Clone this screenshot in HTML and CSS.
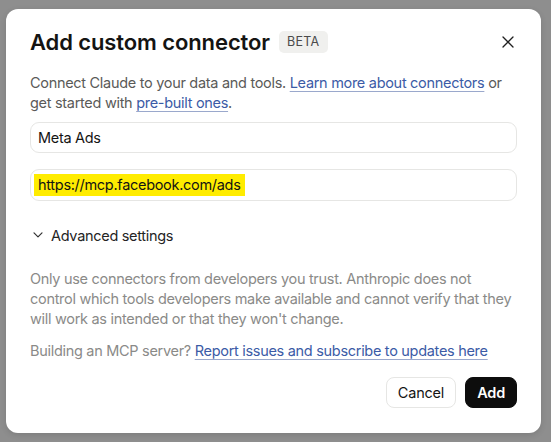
FILE: index.html
```html
<!DOCTYPE html>
<html lang="en">
<head>
    <meta charset="UTF-8">
    <meta name="viewport" content="width=device-width, initial-scale=1.0">
    <title>Add custom connector</title>
    <link rel="stylesheet" href="styles.css">
</head>
<body>
    <div class="overlay">
        <div class="modal">
            <div class="modal-header">
                <h2>Add custom connector</h2>
                <span class="badge">BETA</span>
                <button class="close-btn" aria-label="Close">
                    <svg width="12" height="12" viewBox="0 0 12 12">
                        <path d="M1 1 L11 11 M11 1 L1 11" stroke="#1f1f1f" stroke-width="1.3" fill="none" stroke-linecap="round"/>
                    </svg>
                </button>
            </div>

            <p class="intro">
                Connect Claude to your data and tools. <a href="#">Learn more about connectors</a> or
                get started with <a href="#">pre-built ones</a>.
            </p>

            <div class="field">
                <input type="text" class="text-input" value="Meta Ads">
            </div>
            <div class="field field-url">
                <div class="text-input"><span class="highlight">https://mcp.facebook.com/ads</span></div>
            </div>

            <div class="advanced">
                <svg width="10" height="6" viewBox="0 0 10 6">
                    <path d="M1 0.8 L5 4.8 L9 0.8" stroke="#333" stroke-width="1.2" fill="none" stroke-linecap="round" stroke-linejoin="round"/>
                </svg>
                <span>Advanced settings</span>
            </div>

            <p class="warning">
                Only use connectors from developers you trust. Anthropic does not
                control which tools developers make available and cannot verify that they
                will work as intended or that they won't change.
            </p>

            <p class="building">
                Building an MCP server? <a href="#">Report issues and subscribe to updates here</a>
            </p>

            <div class="actions">
                <button class="btn btn-cancel">Cancel</button>
                <button class="btn btn-add">Add</button>
            </div>
        </div>
    </div>
</body>
</html>
```

FILE: styles.css
```css
body {
    margin: 0;
    font-family: Inter, "Noto Sans", sans-serif;
    background-color: #8e8e8e;
    height: 442px;
    overflow: hidden;
}

.overlay {
    padding: 9px 0 0 6px;
}

.modal {
    background: white;
    width: 535px;
    height: 424px;
    box-sizing: border-box;
    border-radius: 12px;
    padding: 19px 24px 0 24px;
    box-shadow: 0 2px 6px rgba(0, 0, 0, 0.12);
    letter-spacing: -0.3px;
}

.modal-header {
    display: flex;
    align-items: center;
    height: 28px;
}

h2 {
    margin: 0;
    font-size: 22px;
    font-weight: 600;
    color: #141413;
    letter-spacing: -0.1px;
}

.badge {
    margin-left: 9px;
    background-color: #f0f0ee;
    color: #4a4a4a;
    font-size: 12.5px;
    padding: 3px 8px;
    border-radius: 5px;
    line-height: 16px;
    letter-spacing: 0.3px;
}

.close-btn {
    margin-left: auto;
    margin-right: 2px;
    background: none;
    border: none;
    padding: 0;
    width: 14px;
    height: 14px;
    display: flex;
    align-items: center;
    justify-content: center;
    cursor: pointer;
}

.intro {
    margin: 17px 0 0 0;
    font-size: 14.5px;
    line-height: 20px;
    color: #5a5a58;
}

a {
    color: #3b5ba6;
    text-decoration: underline;
    text-decoration-color: #9aa8cc;
    text-underline-offset: 3px;
    text-decoration-thickness: 1px;
}

.field {
    margin-top: 9px;
}

.field-url {
    margin-top: 16px;
}

.text-input {
    display: block;
    width: 100%;
    height: 31px;
    box-sizing: border-box;
    border: 1px solid #e6e6e4;
    border-radius: 9px;
    padding: 0 7px;
    font-family: inherit;
    font-size: 14.5px;
    letter-spacing: -0.3px;
    color: #141413;
    background: white;
    outline: none;
}

.field-url .text-input {
    height: 32px;
    display: flex;
    align-items: center;
    padding: 0 3px;
}

.highlight {
    background-color: #ffec00;
    padding: 3px 4px 3px 4px;
    line-height: 16px;
}

.advanced {
    display: flex;
    align-items: center;
    margin-top: 24px;
    height: 20px;
    font-size: 14.5px;
    color: #242424;
    padding-left: 3px;
}

.advanced svg {
    margin-right: 8px;
}

.warning {
    margin: 24px 0 0 0;
    font-size: 14.5px;
    line-height: 20px;
    color: #8a8a88;
}

.building {
    margin: 12px 0 0 0;
    font-size: 14.5px;
    line-height: 20px;
    color: #8a8a88;
}

.actions {
    display: flex;
    justify-content: flex-end;
    gap: 9px;
    margin-top: 16px;
}

.btn {
    height: 31px;
    padding: 0 11px;
    border-radius: 8px;
    font-family: inherit;
    font-size: 14.5px;
    letter-spacing: -0.2px;
    cursor: pointer;
}

.btn-cancel {
    background: white;
    border: 1px solid #e6e6e4;
    color: #141413;
}

.btn-add {
    background: #0d0d0d;
    border: 1px solid #0d0d0d;
    color: white;
    font-weight: 600;
}
```
